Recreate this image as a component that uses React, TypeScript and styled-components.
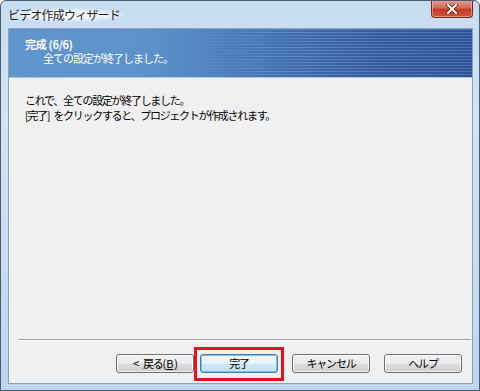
import React from "react";
import styled, { createGlobalStyle } from "styled-components";

const Global = createGlobalStyle`
  html, body { margin: 0; padding: 0; background: #ffffff; }
  body { font-family: "Noto Sans CJK JP", "Liberation Sans", sans-serif; }
`;

const JP = `"Noto Sans CJK JP", "Liberation Sans", sans-serif`;

const Window = styled.div`
  width: 480px;
  height: 391px;
  box-sizing: border-box;
  border: 1px solid #4c5c70;
  border-radius: 6px 6px 0 0;
  background: linear-gradient(180deg, #c6dcf1 0%, #d2e4f5 30%, #bed6ee 100%);
  display: flex;
  flex-direction: column;
  overflow: hidden;
`;

const TitleBar = styled.div`
  height: 27px;
  display: flex;
  align-items: flex-start;
  padding-left: 7px;
  flex-shrink: 0;
`;

const Title = styled.div`
  font-family: ${JP};
  font-size: 12px;
  letter-spacing: -0.8px;
  line-height: 14px;
  color: #1a1a1a;
  margin-top: 7px;
  padding: 0 6px 0 0;
  background: radial-gradient(ellipse at center, rgba(255,255,255,0.75) 40%, rgba(255,255,255,0) 75%);
`;

const CloseButton = styled.div`
  margin-left: auto;
  margin-right: 6px;
  margin-top: -1px;
  width: 42px;
  height: 18px;
  box-sizing: border-box;
  border: 1px solid #6d2a22;
  border-top: none;
  border-radius: 0 0 4px 4px;
  background: linear-gradient(180deg, #e5a291 0%, #d46a55 45%, #c33a22 55%, #d0543a 100%);
  box-shadow: inset 0 0 0 1px rgba(255,255,255,0.35);
  display: flex;
  align-items: center;
  justify-content: center;
`;

const Client = styled.div`
  flex: 1;
  margin: 0 6px 6px 7px;
  border: 1px solid #8aa3bd;
  background: #f0f0f0;
  display: flex;
  flex-direction: column;
  min-height: 0;
`;

const Header = styled.div`
  height: 49px;
  flex-shrink: 0;
  position: relative;
  background: linear-gradient(90deg, #6096cc 0%, #5c91c9 30%, #4a7cbd 55%, #3b64ab 80%, #345ba3 100%);
  border-bottom: 1px solid #b8c8da;
  padding: 8px 0 0 16px;
  box-sizing: border-box;
  overflow: hidden;
  &::before {
    content: "";
    position: absolute;
    inset: 0;
    background: repeating-linear-gradient(180deg, rgba(255,255,255,0.13) 0px, rgba(255,255,255,0.13) 1px, rgba(0,0,40,0.08) 1px, rgba(0,0,40,0.08) 3px);
    -webkit-mask-image: linear-gradient(90deg, transparent 0%, transparent 38%, #000 65%, #000 100%);
    mask-image: linear-gradient(90deg, transparent 0%, transparent 38%, #000 65%, #000 100%);
  }
`;

const HeaderTitle = styled.div`
  position: relative;
  font-family: ${JP};
  font-size: 11px;
  letter-spacing: -0.3px;
  font-weight: bold;
  line-height: 14px;
  color: #ffffff;
`;

const HeaderSub = styled.div`
  position: relative;
  font-family: ${JP};
  font-size: 11px;
  letter-spacing: -1px;
  line-height: 14px;
  color: #ffffff;
  padding-left: 18px;
`;

const Body = styled.div`
  flex: 1;
  padding: 15px 0 0 16px;
  font-family: ${JP};
  font-size: 11px;
  letter-spacing: -1.3px;
  word-spacing: 3px;
  line-height: 15px;
  color: #000;
`;

const Separator = styled.div`
  height: 1px;
  margin: 0 1px 0 9px;
  background: #a0a0a0;
  border-bottom: 1px solid #ffffff;
  flex-shrink: 0;
`;

const ButtonRow = styled.div`
  height: 42px;
  flex-shrink: 0;
  display: flex;
  align-items: flex-start;
  justify-content: flex-end;
  padding: 13px 10px 0 0;
  box-sizing: border-box;
  gap: 14px;
`;

const Pair = styled.div`
  display: flex;
  gap: 6px;
`;

const Button = styled.button<{ $focused?: boolean; $highlight?: boolean }>`
  position: relative;
  width: 78px;
  height: 19px;
  box-sizing: border-box;
  padding: 0;
  font-family: ${JP};
  font-size: 11px;
  letter-spacing: -1.2px;
  line-height: 15px;
  color: #000;
  border: 1px solid ${(p) => (p.$focused ? "#3c7fb1" : "#707070")};
  border-radius: 3px;
  background: ${(p) =>
    p.$focused
      ? "linear-gradient(180deg, #f2f8fc 0%, #e5f1fb 50%, #d2e7f7 51%, #c4e0f4 100%)"
      : "linear-gradient(180deg, #f2f2f2 0%, #ebebeb 50%, #dddddd 51%, #cfcfcf 100%)"};
  box-shadow: inset 0 0 0 1px ${(p) => (p.$focused ? "#7fc4e8" : "rgba(255,255,255,0.7)")};
  display: flex;
  align-items: center;
  justify-content: center;
  &::after {
    content: "";
    display: ${(p) => (p.$highlight ? "block" : "none")};
    position: absolute;
    top: -8px;
    bottom: -9px;
    left: -7px;
    right: -7px;
    border: 3px solid #e8101c;
  }
`;

const Chevron = styled.span`
  margin-right: 5px;
`;

const Mnemonic = styled.span`
  letter-spacing: 0;
  text-decoration: underline;
  margin: 0 1px;
`;

export default function App() {
  return (
    <>
      <Global />
      <Window>
        <TitleBar>
          <Title>ビデオ作成ウィザード</Title>
          <CloseButton>
            <svg width="12" height="10" viewBox="0 0 12 10">
              <path d="M2 1 L10 9 M10 1 L2 9" stroke="#5a1a10" strokeWidth="3.4" strokeLinecap="square" />
              <path d="M2 1 L10 9 M10 1 L2 9" stroke="#ffffff" strokeWidth="2" strokeLinecap="square" />
            </svg>
          </CloseButton>
        </TitleBar>
        <Client>
          <Header>
            <HeaderTitle>完成 (6/6)</HeaderTitle>
            <HeaderSub>全ての設定が終了しました。</HeaderSub>
          </Header>
          <Body>
            <div>これで、全ての設定が終了しました。</div>
            <div>[完了] をクリックすると、プロジェクトが作成されます。</div>
          </Body>
          <Separator />
          <ButtonRow>
            <Pair>
              <Button><Chevron>&lt;</Chevron>戻る(<Mnemonic>B</Mnemonic>)</Button>
              <Button $focused $highlight>完了</Button>
            </Pair>
            <Button>キャンセル</Button>
            <Button>ヘルプ</Button>
          </ButtonRow>
        </Client>
      </Window>
    </>
  );
}
